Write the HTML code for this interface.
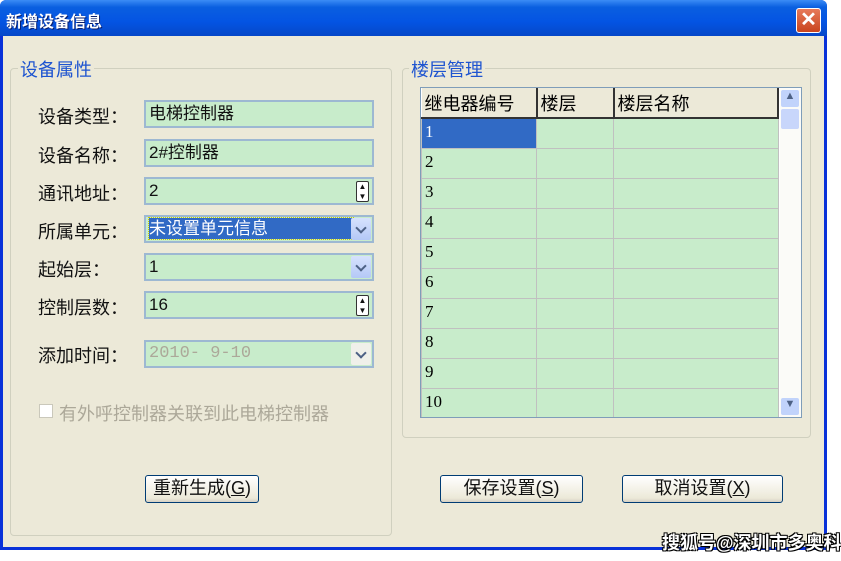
<!DOCTYPE html>
<html><head><meta charset="utf-8"><style>
*{margin:0;padding:0;box-sizing:border-box}
body{width:841px;height:561px;background:#fff;position:relative;overflow:hidden;font-family:"Liberation Sans","Noto Sans CJK SC",sans-serif}
.a{position:absolute}
.win{left:0;top:0;width:827px;height:550px;background:#0831d9;border-radius:6px 6px 0 0}
.title{left:0;top:0;width:827px;height:36px;border-radius:6px 6px 0 0;background:linear-gradient(#3b8cf5,#0a5fe0 20%,#0454e3 60%,#0648c8)}
.body{left:3px;top:36px;width:821px;height:511px;background:#ece9d8}
.tt{left:6px;top:8px;color:#fff;font-weight:bold;font-size:16px;text-shadow:1px 1px #0a1f6e}
.x{left:796px;top:8px;width:25px;height:25px;border:1px solid #fff;border-radius:3px;background:linear-gradient(#e77a5a,#c9441e);color:#fff;font-size:20px;line-height:22px;text-align:center;font-weight:bold}
.grp{border:1px solid #d0d0bf;border-radius:4px}
.gt{background:#ece9d8;color:#1e54d0;font-size:18px;padding:0 2px}
.lbl{font-size:18px;color:#111}
.fld{left:144px;width:230px;height:28px;background:#c8eccb;border:2px solid #9db8d2;font-size:17px;padding:0 3px;line-height:23px;color:#111}
.spin{position:absolute;right:3px;top:2px;width:13px;height:21px;font-size:8px;line-height:10px;text-align:center;border:1px solid #333;border-radius:2px;background:#fff}
.dd{position:absolute;right:1px;top:1px;width:20px;height:22px;background:linear-gradient(#d6e2fd,#b4c8f6);border-radius:2px}
.dd:after{content:"";position:absolute;left:6px;top:6px;width:6px;height:6px;border-right:2px solid #4d6185;border-bottom:2px solid #4d6185;transform:rotate(45deg)}
.btn{height:28px;border:1px solid #003c74;border-radius:3px;background:linear-gradient(#fff,#ece9d8 85%,#d6d0c5);font-size:18px;text-align:center;line-height:25px;color:#111}
table{border-collapse:collapse;font-size:17px}
td{border:1px solid #c0c0c0;height:30px;background:#c8eccb;padding-left:3px;vertical-align:top;padding-top:3px;font-family:"Liberation Serif","Noto Sans CJK SC",serif}
th{height:30px;background:#ece9d8;font-weight:normal;text-align:left;padding-left:3px;border-right:2px solid #333;border-bottom:2px solid #333;font-size:18px}
</style></head><body>
<div class="a win"></div>
<div class="a title"></div>
<div class="a tt">新增设备信息</div>
<div class="a x">✕</div>
<div class="a body"></div>

<div class="a grp" style="left:10px;top:68px;width:382px;height:468px"></div>
<div class="a gt" style="left:18px;top:56px">设备属性</div>
<div class="a grp" style="left:402px;top:68px;width:409px;height:370px"></div>
<div class="a gt" style="left:409px;top:56px">楼层管理</div>

<div class="a lbl" style="left:38px;top:103px">设备类型：</div>
<div class="a lbl" style="left:38px;top:142px">设备名称：</div>
<div class="a lbl" style="left:38px;top:180px">通讯地址：</div>
<div class="a lbl" style="left:38px;top:218px">所属单元：</div>
<div class="a lbl" style="left:38px;top:256px">起始层：</div>
<div class="a lbl" style="left:38px;top:294px">控制层数：</div>
<div class="a lbl" style="left:38px;top:342px">添加时间：</div>

<div class="a fld" style="top:100px">电梯控制器</div>
<div class="a fld" style="top:139px">2#控制器</div>
<div class="a fld" style="top:177px">2<div class="spin">▲<br>▼</div></div>
<div class="a fld" style="top:215px"><span style="background:#316ac5;color:#fff;display:block;width:204px;margin-top:1px;line-height:21px;outline:1px dotted #cc0">未设置单元信息</span><div class="dd"></div></div>
<div class="a fld" style="top:253px">1<div class="dd"></div></div>
<div class="a fld" style="top:291px">16<div class="spin">▲<br>▼</div></div>
<div class="a fld" style="top:340px;color:#aca899;font-family:'Liberation Mono',monospace">2010- 9-10<div class="dd" style="background:#f0f0ea"></div></div>

<div class="a" style="left:39px;top:404px;width:14px;height:14px;border:1px solid #cac8bb;background:#fff"></div>
<div class="a lbl" style="left:59px;top:400px;color:#aca899">有外呼控制器关联到此电梯控制器</div>

<div class="a" style="left:420px;top:87px;width:382px;height:331px;border:1px solid #7f9db9;background:#fff;overflow:hidden">
<table style="width:358px">
<tr><th style="width:115px">继电器编号</th><th style="width:77px">楼层</th><th>楼层名称</th></tr>
<tr><td style="background:#316ac5;color:#fff">1</td><td></td><td></td></tr>
<tr><td>2</td><td></td><td></td></tr><tr><td>3</td><td></td><td></td></tr>
<tr><td>4</td><td></td><td></td></tr><tr><td>5</td><td></td><td></td></tr>
<tr><td>6</td><td></td><td></td></tr><tr><td>7</td><td></td><td></td></tr>
<tr><td>8</td><td></td><td></td></tr><tr><td>9</td><td></td><td></td></tr>
<tr><td>10</td><td></td><td></td></tr>
</table>
<div class="a" style="left:359px;top:0;width:21px;height:329px;background:#fbfbf8"></div>
<div class="a" style="left:360px;top:2px;width:18px;height:17px;background:#c1d3fb;border-radius:2px;color:#4d6185;font-size:11px;text-align:center">▲</div>
<div class="a" style="left:360px;top:21px;width:18px;height:20px;background:#c8d6fb;border-radius:2px"></div>
<div class="a" style="left:360px;top:310px;width:18px;height:17px;background:#c1d3fb;border-radius:2px;color:#4d6185;font-size:11px;text-align:center">▼</div>
</div>

<div class="a btn" style="left:145px;top:475px;width:114px">重新生成(<u>G</u>)</div>
<div class="a btn" style="left:440px;top:475px;width:143px">保存设置(<u>S</u>)</div>
<div class="a btn" style="left:622px;top:475px;width:161px">取消设置(<u>X</u>)</div>

<div class="a" style="left:662px;top:529px;color:#fff;font-weight:bold;font-size:18px;white-space:nowrap;text-shadow:1px 1px 0 #000,-1px -1px 0 #000,1px -1px 0 #000,-1px 1px 0 #000">搜狐号@深圳市多奥科</div>
</body></html>
